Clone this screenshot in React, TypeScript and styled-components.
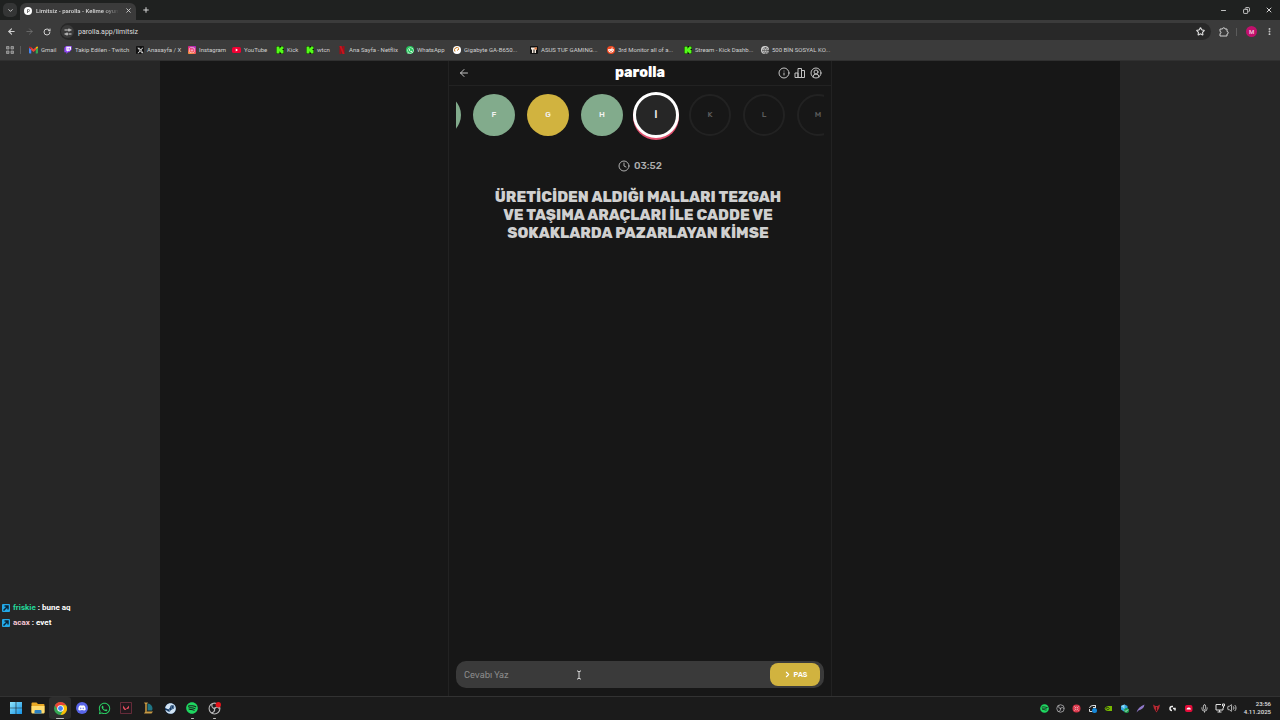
import React from "react";
import styled, { createGlobalStyle, css } from "styled-components";
import {
  ArrowLeft, ArrowRight, ChevronDown, ChevronRight, CircleUserRound, Clock, Copy, EllipsisVertical,
  Globe, Info, Mic, Minus, Plus, RotateCw, Star, Volume2, X,
} from "lucide-react";
import { FaDiscord, FaInstagram, FaRedditAlien, FaSpotify, FaSteam, FaWhatsapp, FaXTwitter } from "react-icons/fa6";

const GlobalStyle = createGlobalStyle`
  * { box-sizing: border-box; }
  body { margin: 0; background: #171717; font-family: Inter, "Noto Sans", sans-serif; }
  button { border: 0; padding: 0; background: none; color: inherit; font: inherit; cursor: pointer; }
  a { color: inherit; text-decoration: none; }
  svg { display: block; flex: none; }
`;

const chromeFont = `Roboto, "Noto Sans", sans-serif`;
const gameFont = `Rubik, Inter, sans-serif`;

const Screen = styled.div`
  min-height: 100vh;
  display: flex;
  flex-direction: column;
`;

/* Browser window */
const TabStrip = styled.div`
  height: 20px;
  padding: 0 6px 0 3px;
  display: flex;
  align-items: center;
  background: #1f2120;
  color: #d8d8d8;
  font: 500 6px/8px ${chromeFont};
`;
const TabSearch = styled.button`
  width: 14px;
  height: 14px;
  border-radius: 5px;
  background: #343535;
  display: grid;
  place-items: center;
`;
const Tab = styled.div`
  width: 116px;
  height: 17px;
  margin: 3px 0 0 3px;
  padding: 0 3px 2px 4px;
  border-radius: 6px 6px 0 0;
  background: #3b3b3b;
  display: flex;
  align-items: center;
  gap: 4px;
`;
const TabTitle = styled.span`
  flex: 1;
  overflow: hidden;
  white-space: nowrap;
  mask-image: linear-gradient(90deg, #000 80%, transparent);
`;
const IconButton = styled.button`
  display: grid;
  place-items: center;
  min-width: 10px;
  height: 10px;
`;
const NewTab = styled(IconButton)`
  margin-left: 5px;
`;
const WindowControls = styled.div`
  margin-left: auto;
  display: flex;
  gap: 13px;
`;
const Toolbar = styled.div`
  height: 22px;
  padding: 1px 6px 0;
  display: flex;
  align-items: center;
  gap: 8px;
  background: #3b3b3b;
  color: #d0d0d0;
`;
const Address = styled.div`
  flex: 1;
  height: 17px;
  padding: 0 6px 0 1px;
  border-radius: 9px;
  background: #282828;
  display: flex;
  align-items: center;
  gap: 4px;
  font: 400 7px/10px ${chromeFont};
  color: #dedede;
`;
const SiteInfo = styled.button`
  width: 13px;
  height: 13px;
  border-radius: 50%;
  background: #3a3a3a;
  display: grid;
  place-items: center;
`;
const Url = styled.span`
  flex: 1;
`;
const ToolbarEnd = styled.div`
  display: flex;
  align-items: center;
  gap: 7px;
`;
const Divider = styled.span`
  width: 1px;
  height: 8px;
  background: #5b5b5b;
`;
const Profile = styled.button`
  width: 11px;
  height: 11px;
  border-radius: 50%;
  background: #c2106c;
  color: #f3d4e4;
  font: 500 6px/11px ${chromeFont};
  margin-left: 2px;
`;
const Bookmarks = styled.nav`
  height: 19px;
  padding: 0 5px 2px 6px;
  display: flex;
  align-items: center;
  background: #3b3b3b;
  border-bottom: 1px solid #303030;
  color: #d0d0d0;
  font: 400 6px/8px ${chromeFont};
`;
const BookmarksLead = styled.div`
  width: 23px;
  display: flex;
  align-items: center;
  gap: 6px;
`;
const Bookmark = styled.a<{ $width: number }>`
  width: ${(p) => p.$width}px;
  display: flex;
  align-items: center;
  gap: 3px;
  white-space: nowrap;
`;
const Favicon = styled.span<{ $bg?: string; $color?: string; $round?: boolean; $size?: number }>`
  width: ${(p) => p.$size ?? 8}px;
  height: ${(p) => p.$size ?? 8}px;
  border-radius: ${(p) => (p.$round ? "50%" : "1px")};
  background: ${(p) => p.$bg ?? "transparent"};
  color: ${(p) => p.$color ?? "#fff"};
  display: grid;
  place-items: center;
  flex: none;
`;

/* Page */
const Page = styled.div`
  flex: 1;
  display: flex;
  background: #171717;
`;
const Side = styled.aside`
  width: 12.5%;
  background: #262626;
`;
const Chat = styled(Side)`
  display: flex;
  flex-direction: column;
  justify-content: flex-end;
  padding: 0 0 66px 2px;
`;
const ChatLine = styled.p`
  margin: 0;
  display: flex;
  align-items: center;
  gap: 3px;
  font: 700 8px/15px Roboto, sans-serif;
  color: #fff;
`;
const ChatName = styled.span<{ $color: string }>`
  color: ${(p) => p.$color};
`;
const Stage = styled.div`
  flex: 1;
  display: flex;
  justify-content: center;
`;
const Game = styled.main`
  width: 384px;
  border: solid #222;
  border-width: 0 1px;
  display: flex;
  flex-direction: column;
`;
const GameHeader = styled.header`
  height: 25px;
  padding: 0 9px;
  border-bottom: 1px solid #222;
  display: grid;
  grid-template-columns: 1fr auto 1fr;
  align-items: center;
  color: #c4c4c4;
`;
const Brand = styled.h1`
  margin: 0;
  font: 800 14px/16px ${gameFont};
  color: #fff;
`;
const HeaderActions = styled.div`
  display: flex;
  justify-content: flex-end;
  gap: 4px;
`;
const HeaderButton = styled.button`
  width: 12px;
  height: 12px;
  display: grid;
  place-items: center;
`;
const Carousel = styled.div`
  margin: 0 7px;
  height: 60px;
  overflow: hidden;
`;
const Track = styled.ol`
  margin: 0 0 0 -37px;
  padding: 0;
  height: 58px;
  list-style: none;
  display: flex;
  align-items: center;
  gap: 12px;
`;
type State = "correct" | "passed" | "active" | "idle";
const letterLook = {
  correct: css`background: #82ab8c;`,
  passed: css`background: #d1b33f;`,
  active: css`
    width: 46px;
    height: 46px;
    margin: 0 -2px;
    background: #262626;
    border: 3px solid #fff;
    box-shadow: 0 2px 0 #e2506e;
    font-size: 9px;
    font-weight: 600;
  `,
  idle: css`
    border: 2px solid #222;
    color: #5c5c5c;
  `,
};
const Letter = styled.li<{ $state: State }>`
  width: 42px;
  height: 42px;
  flex: none;
  border-radius: 50%;
  display: grid;
  place-items: center;
  font: 500 8px/12px ${gameFont};
  color: #f2f2f2;
  ${(p) => letterLook[p.$state]}
`;
const Timer = styled.div`
  margin-top: 14px;
  display: flex;
  align-items: center;
  justify-content: center;
  gap: 4px;
  font: 500 10px/12px ${gameFont};
  color: #adadad;
`;
const Question = styled.h2`
  margin: 16px 40px 0 36px;
  font: 800 15px/18px ${gameFont};
  text-align: center;
  color: #d0d0d0;
`;
const Answer = styled.form`
  position: relative;
  height: 27px;
  margin: auto 7px 8px;
  padding: 2px 4px 2px 8px;
  border-radius: 10px;
  background: #3a3a3a;
  display: flex;
  align-items: center;
`;
const AnswerInput = styled.input`
  flex: 1;
  min-width: 0;
  border: 0;
  padding: 0;
  outline: 0;
  background: transparent;
  color: #e0e0e0;
  font: 400 9px/12px ${gameFont};
  &::placeholder { color: #8b8b8b; opacity: 1; }
`;
const PassButton = styled.button`
  width: 50px;
  height: 23px;
  border-radius: 8px;
  background: #d1b33f;
  color: #fff;
  display: flex;
  align-items: center;
  justify-content: center;
  gap: 2px;
  font: 600 7px/10px ${gameFont};
`;
const TextCursor = styled.svg`
  position: absolute;
  left: 120px;
  top: 9px;
`;

/* Desktop taskbar */
const Taskbar = styled.footer`
  height: 24px;
  padding: 0 9px 1px 5px;
  border-top: 1px solid #323232;
  background: #1b1b1b;
  display: flex;
  justify-content: space-between;
  align-items: center;
  color: #e0e0e0;
`;
const Apps = styled.div`
  display: flex;
`;
const AppButton = styled.button<{ $active?: boolean; $running?: boolean }>`
  width: 22px;
  height: 22px;
  border-radius: 3px;
  display: grid;
  place-items: center;
  background: ${(p) => (p.$active ? "#2d2d2d" : "transparent")};
  position: relative;
  &::after {
    content: "";
    display: ${(p) => (p.$active || p.$running ? "block" : "none")};
    position: absolute;
    bottom: 0;
    width: ${(p) => (p.$active ? 8 : 3)}px;
    height: 1px;
    border-radius: 1px;
    background: #bdbdbd;
  }
`;
const Tray = styled.div`
  display: flex;
  align-items: center;
`;
const TrayItem = styled.button`
  width: 16px;
  height: 16px;
  display: grid;
  place-items: center;
`;
const TrayNetwork = styled.button`
  display: flex;
  align-items: center;
  gap: 2px;
  margin-left: 3px;
`;
const ClockText = styled.time`
  width: 34px;
  text-align: right;
  font: 500 6px/8px ${chromeFont};
  white-space: nowrap;
`;

const KickIcon = () => (
  <Favicon $bg="#0c120a">
    <svg width="8" height="8" viewBox="0 0 16 16"><path fill="#53fc18" d="M1 1h6v4h1V3h2V1h5v5h-2v2h2v7h-5v-2H8v-2H7v4H1z" /></svg>
  </Favicon>
);
const GmailIcon = () => (
  <svg width="9" height="8" viewBox="0 0 24 18">
    <path fill="#4285f4" d="M0 3v13q0 2 2 2h4V7z" />
    <path fill="#34a853" d="M24 3v13q0 2-2 2h-4V7z" />
    <path fill="#ea4335" d="M5 1l7 6 7-6v7l-7 6-7-6z" />
    <path fill="#c5221f" d="M0 3q0-5 5-2l1 6z" />
    <path fill="#fbbc04" d="M24 3q0-5-5-2l-1 6z" />
  </svg>
);
const TwitchIcon = () => (
  <svg width="8" height="8" viewBox="0 0 24 24">
    <path fill="#8f45f5" d="M6 0 1 5v14h6v5l5-5h4l7-8V0z" />
    <path fill="#fff" d="M7 2h14v8l-4 4h-4l-3 3v-3H7z" />
    <path fill="#8f45f5" d="M11 5h2v6h-2zm5 0h2v6h-2z" />
  </svg>
);
const YouTubeIcon = () => (
  <svg width="9" height="8" viewBox="0 0 24 20"><rect y="2" width="24" height="16" rx="5" fill="#f00033" /><path fill="#fff" d="m10 6 6 4-6 4z" /></svg>
);
const NetflixIcon = () => (
  <svg width="8" height="8" viewBox="0 0 16 16"><path fill="#a50d16" d="M3 0h4v16H3zm6 0h4v16H9z" /><path fill="#c9131e" d="M3 0h4l6 16H9z" /></svg>
);
const GaugeIcon = () => (
  <Favicon $bg="#fff" $round><svg width="6" height="6" viewBox="0 0 12 12"><path fill="none" stroke="#c77718" strokeWidth="2" d="M2 9a5 5 0 0 1 8-6M6 7l4-3" /></svg></Favicon>
);
const TufIcon = () => (
  <Favicon $bg="#111"><svg width="8" height="8" viewBox="0 0 16 16"><path fill="#f5e9dd" d="M2 3h12v4h-2v7H9V7H7v7H4V7H2z" /><path fill="#dc7a42" d="M9 3h5v4H9z" /></svg></Favicon>
);
const ParollaIcon = () => (
  <svg width="8" height="8" viewBox="0 0 16 16"><circle cx="8" cy="8" r="8" fill="#fff" /><path fill="none" stroke="#777" strokeWidth="2" d="M7 12V5h2a2 2 0 0 1 0 4H7" /></svg>
);
const TuneIcon = () => (
  <svg width="8" height="8" viewBox="0 0 16 16" fill="none" stroke="#d8d8d8" strokeWidth="2"><path d="M1 4h6M10 12h5M1 12h3M12 4h3" /><circle cx="10" cy="4" r="2" /><circle cx="6" cy="12" r="2" /></svg>
);
const GridIcon = () => (
  <svg width="8" height="8" viewBox="0 0 16 16" fill="#777" stroke="#a5a5a5" strokeWidth="1.500"><path d="M1 1h5v5H1zM10 1h5v5h-5zM1 10h5v5H1zM10 10h5v5h-5z" /></svg>
);
const ExtensionIcon = () => (
  <svg width="10" height="10" viewBox="0 0 20 20" fill="none" stroke="#d0d0d0" strokeWidth="2" strokeLinejoin="round"><path d="M2 4h5a2.500 2.500 0 0 1 5 0h4v5a2.500 2.500 0 0 1 0 5v4H2v-5a2 2 0 0 0 0-4z" /></svg>
);
const ChartIcon = () => (
  <svg width="12" height="12" viewBox="0 0 24 24" fill="none" stroke="currentColor" strokeWidth="2" strokeLinejoin="round"><path d="M2 21V12h6v9zM8 21V3h7v18zM15 21V7h6v14z" /></svg>
);
const ArrowBadge = () => (
  <svg width="8" height="8" viewBox="0 0 16 16"><rect width="16" height="16" rx="2" fill="#23a9e8" /><path fill="none" stroke="#0b2538" strokeWidth="3" d="m3 13 8-8M5 4h7v7" /></svg>
);
const WindowsIcon = () => (
  <svg width="12" height="12" viewBox="0 0 12 12">
    <defs><linearGradient id="win" x2="1" y2="1"><stop stopColor="#8fe5fb" /><stop offset="1" stopColor="#1593e6" /></linearGradient></defs>
    <path fill="url(#win)" d="M0 0h5.700v5.700H0zM6.300 0H12v5.700H6.300zM0 6.300h5.700V12H0zM6.300 6.300H12V12H6.300z" />
  </svg>
);
const FolderIcon = () => (
  <svg width="14" height="12" viewBox="0 0 28 24"><path fill="#e9a825" d="M1 3q0-2 2-2h8l3 3h11q2 0 2 2v15H1z" /><path fill="#ffdc70" d="M1 8h26v13q0 2-2 2H3q-2 0-2-2z" /><path fill="#2b7fc0" d="M7 23v-5q0-2 2-2h10q2 0 2 2v5z" /></svg>
);
const ChromeIcon = () => (
  <svg width="13" height="13" viewBox="0 0 24 24">
    <circle cx="12" cy="12" r="12" fill="#34a853" />
    <path fill="#ea4335" d="M1.600 6A12 12 0 0 1 22.400 6H12L7 15z" />
    <path fill="#fbbc04" d="M22.400 6A12 12 0 0 1 12 24l5-9-5-9z" />
    <circle cx="12" cy="12" r="6" fill="#fff" /><circle cx="12" cy="12" r="4.500" fill="#4285f4" />
  </svg>
);
const ValorantIcon = () => (
  <svg width="12" height="12" viewBox="0 0 24 24"><path fill="#21191d" stroke="#7d3244" strokeWidth="1.500" d="M1 1h22v22H1z" /><path fill="#e34a5d" d="m6 7 7 9h-4l-3-4zm12 0v5l-2 2h-4z" /></svg>
);
const LeagueIcon = () => (
  <svg width="12" height="12" viewBox="0 0 24 24"><path fill="#1f7584" d="M11 3a10 10 0 0 1 9 14h-9z" /><path fill="#c79a45" d="M4 1h8l-2 3v15h12l-3 4H4l2-3V4z" /><path fill="#7a5c2c" d="M7 4h2v16H7z" /></svg>
);
const ObsIcon = ({ size }: { size: number }) => (
  <svg width={size} height={size} viewBox="0 0 24 24" fill="none" stroke="#b9b9b9" strokeWidth="2">
    <circle cx="12" cy="12" r="10" fill="#1e1e20" /><path d="M12 12c-5-1-6-5-4-9M12 12c3-4 8-3 9 1M12 12c1 5-2 8-6 8" /><circle cx="12" cy="12" r="1" />
    {size > 10 && <circle cx="19" cy="5" r="5" fill="#e5141c" stroke="none" />}
  </svg>
);
const NetworkIcon = () => (
  <svg width="10" height="10" viewBox="0 0 20 20" fill="none" stroke="currentColor" strokeWidth="2"><path d="M12 3H2v11h14v-4M5 18h8M9 14v4" /><path d="M15 2h4v4h-4zM17 6v4" /></svg>
);
const TrayGlyph = ({ children }: { children: React.ReactNode }) => <svg width="9" height="9" viewBox="0 0 18 18">{children}</svg>;

const bookmarks: { label: string; width: number; icon: React.ReactNode }[] = [
  { label: "Gmail", width: 35, icon: <GmailIcon /> },
  { label: "Takip Edilen - Twitch", width: 72, icon: <TwitchIcon /> },
  { label: "Anasayfa / X", width: 52, icon: <Favicon $bg="#111"><FaXTwitter size={7} /></Favicon> },
  { label: "Instagram", width: 44, icon: <Favicon $bg="linear-gradient(200deg,#a22bd0,#ef2f65 50%,#fbb03b)"><FaInstagram size={6} /></Favicon> },
  { label: "YouTube", width: 44, icon: <YouTubeIcon /> },
  { label: "Kick", width: 30, icon: <KickIcon /> },
  { label: "wtcn", width: 32, icon: <KickIcon /> },
  { label: "Ana Sayfa - Netflix", width: 68, icon: <NetflixIcon /> },
  { label: "WhatsApp", width: 47, icon: <Favicon $bg="#25c55b" $round><FaWhatsapp size={7} /></Favicon> },
  { label: "Gigabyte GA-B650...", width: 77, icon: <GaugeIcon /> },
  { label: "ASUS TUF GAMING...", width: 77, icon: <TufIcon /> },
  { label: "3rd Monitor all of a...", width: 77, icon: <Favicon $bg="#f04a22" $round><FaRedditAlien size={6} /></Favicon> },
  { label: "Stream - Kick Dashb...", width: 77, icon: <KickIcon /> },
  { label: "500 BİN SOSYAL KO...", width: 77, icon: <Favicon $bg="#d5d5d5" $color="#444" $round><Globe size={7} /></Favicon> },
];

const letters: { char: string; state: State }[] = [
  { char: "E", state: "correct" },
  { char: "F", state: "correct" },
  { char: "G", state: "passed" },
  { char: "H", state: "correct" },
  { char: "İ", state: "active" },
  { char: "K", state: "idle" },
  { char: "L", state: "idle" },
  { char: "M", state: "idle" },
];

const apps: { name: string; icon: React.ReactNode; active?: boolean; running?: boolean }[] = [
  { name: "Start", icon: <WindowsIcon /> },
  { name: "Files", icon: <FolderIcon /> },
  { name: "Chrome", icon: <ChromeIcon />, active: true },
  { name: "Discord", icon: <Favicon $bg="#5865e8" $round $size={12}><FaDiscord size={8} /></Favicon> },
  { name: "WhatsApp", icon: <FaWhatsapp size={13} color="#2bd366" /> },
  { name: "Valorant", icon: <ValorantIcon /> },
  { name: "League", icon: <LeagueIcon /> },
  { name: "Steam", icon: <Favicon $bg="#143a66" $round $size={11}><FaSteam size={11} color="#d2e4f4" /></Favicon> },
  { name: "Spotify", icon: <FaSpotify size={12} color="#1ed760" />, running: true },
  { name: "OBS", icon: <ObsIcon size={13} />, running: true },
];

const tray: { name: string; icon: React.ReactNode }[] = [
  { name: "Spotify", icon: <FaSpotify size={9} color="#1ed760" /> },
  { name: "OBS", icon: <ObsIcon size={9} /> },
  { name: "Recorder", icon: <TrayGlyph><circle cx="9" cy="9" r="8" fill="#d9364a" /><path stroke="#f5c4c9" strokeWidth="2" d="m5 5 8 8M13 5l-8 8" /><circle cx="9" cy="9" r="3" fill="#d9364a" stroke="#f5c4c9" /></TrayGlyph> },
  { name: "Sync", icon: <TrayGlyph><path fill="none" stroke="#ddd" strokeWidth="2" d="M3 8q1-5 7-5h5v5M15 2v5h-5M3 10v5h6" /><circle cx="13" cy="13" r="5" fill="#1688d8" /></TrayGlyph> },
  { name: "Graphics", icon: <TrayGlyph><path fill="#76b900" d="M1 9q3-5 7-5h8v10H8Q3 14 1 9z" /><path fill="none" stroke="#1b1b1b" strokeWidth="1.500" d="M3 9q3-4 6-2t0 4q-3 1-4-2" /></TrayGlyph> },
  { name: "Security", icon: <TrayGlyph><path fill="#33a7df" d="m2 4 7-3 6 3v6l-6 6-7-5z" /><path fill="#8edaf5" d="m2 4 7-3v9z" /><circle cx="13" cy="13" r="5" fill="#1d9e50" /><path fill="none" stroke="#fff" strokeWidth="1.500" d="m10 13 2 2 4-4" /></TrayGlyph> },
  { name: "Feather", icon: <TrayGlyph><path fill="#8f78c8" d="M1 17Q4 6 17 1q-1 9-12 12z" /></TrayGlyph> },
  { name: "Vanguard", icon: <TrayGlyph><path fill="#b52832" d="m2 1 5 3h4l5-3-2 8-5 8-5-8z" /><path stroke="#4a1014" strokeWidth="2" d="M9 6v8" /></TrayGlyph> },
  { name: "Logitech", icon: <TrayGlyph><path fill="none" stroke="#eee" strokeWidth="3" d="M10 5H8a4 4 0 0 0 0 8M10 9h4v4" /></TrayGlyph> },
  { name: "Creative", icon: <TrayGlyph><rect x="2" y="2" width="15" height="14" rx="4" fill="#e50c3a" /><path fill="#fff" d="M5 11q0-4 4-4 4-1 5 4z" /></TrayGlyph> },
  { name: "Microphone", icon: <Mic size={9} strokeWidth={2} /> },
];

export default function App() {
  return (
    <Screen>
      <GlobalStyle />
      <TabStrip>
        <TabSearch aria-label="Search tabs"><ChevronDown size={7} strokeWidth={3} /></TabSearch>
        <Tab>
          <ParollaIcon />
          <TabTitle>Limitsiz - parolla - Kelime oyunu</TabTitle>
          <IconButton aria-label="Close tab"><X size={7} strokeWidth={3} /></IconButton>
        </Tab>
        <NewTab aria-label="New tab"><Plus size={8} strokeWidth={3} /></NewTab>
        <WindowControls>
          <IconButton aria-label="Minimize"><Minus size={7} strokeWidth={3} /></IconButton>
          <IconButton aria-label="Restore"><Copy size={7} strokeWidth={3} transform="scale(-1 1)" /></IconButton>
          <IconButton aria-label="Close"><X size={8} strokeWidth={3} /></IconButton>
        </WindowControls>
      </TabStrip>
      <Toolbar>
        <IconButton aria-label="Back"><ArrowLeft size={9} strokeWidth={3} /></IconButton>
        <IconButton aria-label="Forward"><ArrowRight size={9} color="#777" /></IconButton>
        <IconButton aria-label="Reload"><RotateCw size={8} strokeWidth={3} /></IconButton>
        <Address>
          <SiteInfo aria-label="Site information"><TuneIcon /></SiteInfo>
          <Url>parolla.app/limitsiz</Url>
          <IconButton aria-label="Bookmark"><Star size={9} strokeWidth={3} /></IconButton>
        </Address>
        <ToolbarEnd>
          <IconButton aria-label="Extensions"><ExtensionIcon /></IconButton>
          <Divider />
          <Profile aria-label="Profile">M</Profile>
          <IconButton aria-label="Menu"><EllipsisVertical size={9} strokeWidth={3} /></IconButton>
        </ToolbarEnd>
      </Toolbar>
      <Bookmarks>
        <BookmarksLead><GridIcon /><Divider /></BookmarksLead>
        {bookmarks.map((b) => (
          <Bookmark key={b.label} href="#" $width={b.width}>{b.icon}{b.label}</Bookmark>
        ))}
      </Bookmarks>
      <Page>
        <Chat>
          <ChatLine><ArrowBadge /><span><ChatName $color="#23d99b">friskie</ChatName> : bune aq</span></ChatLine>
          <ChatLine><ArrowBadge /><span><ChatName $color="#f5c6d4">acax</ChatName> : evet</span></ChatLine>
        </Chat>
        <Stage>
          <Game>
            <GameHeader>
              <HeaderButton aria-label="Back"><ArrowLeft size={12} /></HeaderButton>
              <Brand>parolla</Brand>
              <HeaderActions>
                <HeaderButton aria-label="Info"><Info size={12} /></HeaderButton>
                <HeaderButton aria-label="Statistics"><ChartIcon /></HeaderButton>
                <HeaderButton aria-label="Account"><CircleUserRound size={12} /></HeaderButton>
              </HeaderActions>
            </GameHeader>
            <Carousel>
              <Track>
                {letters.map((l) => <Letter key={l.char} $state={l.state}>{l.char}</Letter>)}
              </Track>
            </Carousel>
            <Timer><Clock size={12} />03:52</Timer>
            <Question>ÜRETİCİDEN ALDIĞI MALLARI TEZGAH VE TAŞIMA ARAÇLARI İLE CADDE VE SOKAKLARDA PAZARLAYAN KİMSE</Question>
            <Answer onSubmit={(e) => e.preventDefault()}>
              <AnswerInput aria-label="Cevabı Yaz" placeholder="Cevabı Yaz" />
              <PassButton type="button"><ChevronRight size={9} strokeWidth={3} />PAS</PassButton>
              <TextCursor width="6" height="10" viewBox="0 0 6 10" fill="none" stroke="#d5d5d5"><path d="M1 1h1l1 1 1-1h1M3 2v6M1 9h1l1-1 1 1h1" /></TextCursor>
            </Answer>
          </Game>
        </Stage>
        <Side />
      </Page>
      <Taskbar>
        <Apps>
          {apps.map((a) => (
            <AppButton key={a.name} aria-label={a.name} $active={a.active} $running={a.running}>{a.icon}</AppButton>
          ))}
        </Apps>
        <Tray>
          {tray.map((t) => <TrayItem key={t.name} aria-label={t.name}>{t.icon}</TrayItem>)}
          <TrayNetwork aria-label="Network and volume"><NetworkIcon /><Volume2 size={10} /></TrayNetwork>
          <ClockText>23:56<br />4.11.2025</ClockText>
        </Tray>
      </Taskbar>
    </Screen>
  );
}
